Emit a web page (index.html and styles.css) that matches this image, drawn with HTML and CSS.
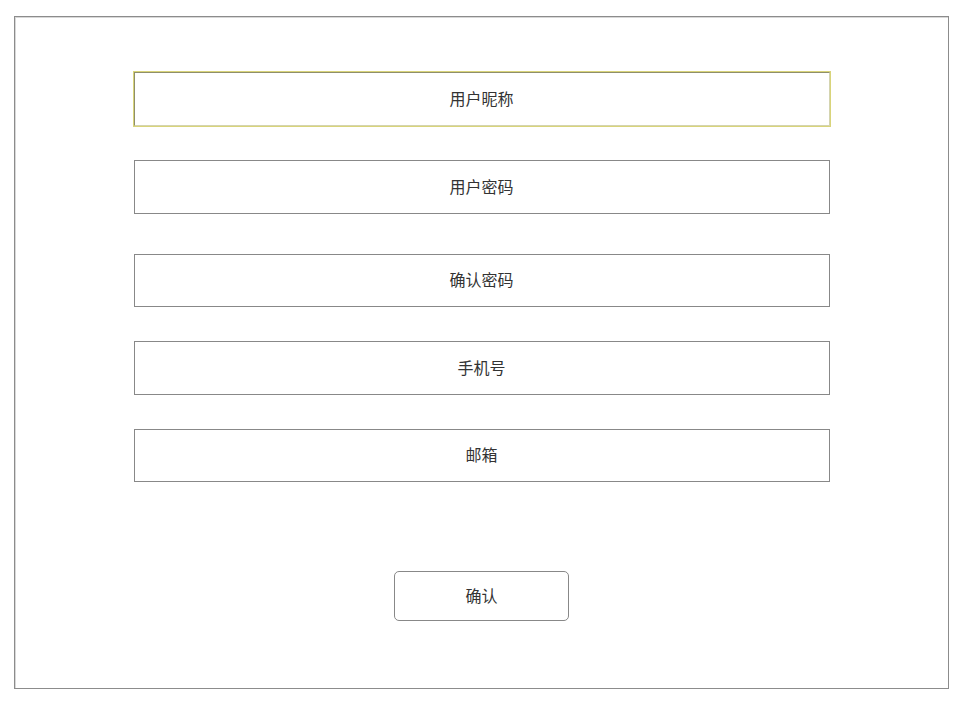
FILE: index.html
```html
<!DOCTYPE html>
<html lang="zh">
<head>
<meta charset="utf-8">
<title>注册</title>
<link rel="stylesheet" href="styles.css">
</head>
<body>
<div class="frame">
  <div class="field field-focus">用户昵称</div>
  <div class="field">用户密码</div>
  <div class="field field-short field-wide-gap">确认密码</div>
  <div class="field">手机号</div>
  <div class="field field-short">邮箱</div>
  <div class="btn">确认</div>
</div>
</body>
</html>
```
FILE: styles.css
```css
html, body {
  margin: 0;
  padding: 0;
  background: #ffffff;
}
body {
  font-family: "Noto Sans CJK SC", "Noto Sans", sans-serif;
  color: #333333;
}
.frame {
  margin: 16px 0 0 14px;
  width: 935px;
  height: 673px;
  box-sizing: border-box;
  border: 1px solid #8c8c8c;
  box-shadow: inset 1px 1px 0 #d8d8d8;
  display: flex;
  flex-direction: column;
  align-items: center;
  padding-top: 55px;
}
.field {
  box-sizing: border-box;
  width: 696px;
  height: 54px;
  border: 1px solid #888888;
  display: flex;
  align-items: center;
  justify-content: center;
  font-size: 16px;
  padding-bottom: 3px;
  margin-top: 34px;
  flex: none;
}
.field-short {
  height: 53px;
}
.field-focus {
  margin-top: 0;
  border-color: #8f8f6a #d4d4b0 #d4d4b0 #8f8f6a;
  box-shadow: 0 0 0 1px #d9d47a;
}
.field-wide-gap {
  margin-top: 40px;
}
.btn {
  box-sizing: border-box;
  margin-top: 89px;
  width: 175px;
  height: 50px;
  border: 1px solid #888888;
  border-radius: 5px;
  display: flex;
  align-items: center;
  justify-content: center;
  font-size: 16px;
  padding-bottom: 3px;
  flex: none;
}
```
